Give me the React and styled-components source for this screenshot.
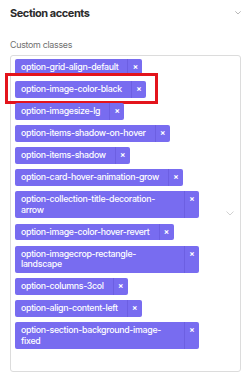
import React from "react";
import styled, { createGlobalStyle } from "styled-components";

const Global = createGlobalStyle`
  html, body { margin: 0; padding: 0; background: #ffffff; }
  body { font-family: Inter, "Noto Sans", sans-serif; -webkit-font-smoothing: antialiased; }
`;

const Page = styled.div`
  width: 250px;
  height: 378px;
  box-sizing: border-box;
  padding: 0 9px 0 10px;
  overflow: hidden;
`;

const Header = styled.div`
  height: 25px;
  display: flex;
  align-items: center;
  justify-content: space-between;
`;

const Title = styled.h3`
  margin: 0;
  font-size: 11px;
  font-weight: 700;
  color: #2b2b2b;
  letter-spacing: -0.45px;
`;

const Label = styled.div`
  margin-top: 14px;
  font-size: 8.9px;
  line-height: 12px;
  color: #707070;
  letter-spacing: -0.3px;
`;

const Control = styled.div`
  margin-top: 4px;
  border: 1px solid #dcdcdc;
  border-radius: 3px;
  display: flex;
  align-items: stretch;
`;

const Values = styled.div`
  flex: 1;
  display: flex;
  flex-wrap: wrap;
  align-items: flex-start;
  row-gap: 5.5px;
  column-gap: 4px;
  padding: 3px 0 0 4px;
`;

const Tag = styled.div`
  position: relative;
  display: flex;
  align-items: stretch;
  max-width: 184px;
  background: #786cf0;
  border-radius: 2px;
  color: #ffffff;
  font-size: 8.8px;
  font-weight: 500;
  line-height: 10.5px;
  letter-spacing: -0.3px;

  ${(p) =>
    p.$highlighted &&
    `
    &::after {
      content: "";
      position: absolute;
      left: -10px;
      top: -8px;
      right: -12px;
      bottom: -6px;
      border: 3px solid #e3141c;
      pointer-events: none;
    }
  `}
`;

const TagLabel = styled.span`
  padding: 3px 9px 3px 6px;
  flex: 1;
  min-width: 0;
`;

const Remove = styled.span`
  width: 14px;
  flex: none;
  border-left: 1px solid #6c5fe2;
  display: flex;
  justify-content: center;
  padding-top: 3px;
  font-size: 8px;
  line-height: 10.5px;
  font-weight: 700;
  letter-spacing: 0;
`;

const InputLine = styled.div`
  flex-basis: 100%;
  height: 16.5px;
`;

const Indicator = styled.div`
  flex: none;
  display: flex;
  align-items: center;
  padding: 0 6px 0 8px;
`;

const Chevron = ({ size = 8, color = "#999" }) => (
  <svg width={size} height={size * 0.6} viewBox="0 0 10 6" fill="none">
    <path d="M1 1l4 4 4-4" stroke={color} strokeWidth="1.2" strokeLinecap="round" strokeLinejoin="round" />
  </svg>
);

const HeaderChevron = styled.span`
  display: flex;
`;

const tags = [
  "option-grid-align-default",
  "option-image-color-black",
  "option-imagesize-lg",
  "option-items-shadow-on-hover",
  "option-items-shadow",
  "option-card-hover-animation-grow",
  "option-collection-title-decoration-arrow",
  "option-image-color-hover-revert",
  "option-imagecrop-rectangle-landscape",
  "option-columns-3col",
  "option-align-content-left",
  "option-section-background-image-fixed",
];

export default function App() {
  return (
    <>
      <Global />
      <Page>
        <Header>
          <Title>Section accents</Title>
          <HeaderChevron>
            <Chevron size={6} color="#9a9a9a" />
          </HeaderChevron>
        </Header>
        <Label>Custom classes</Label>
        <Control>
          <Values>
            {tags.map((t) => (
              <Tag key={t} $highlighted={t === "option-image-color-black"}>
                <TagLabel>{t}</TagLabel>
                <Remove>×</Remove>
              </Tag>
            ))}
            <InputLine />
          </Values>
          <Indicator>
            <Chevron size={8} color="#cfcfcf" />
          </Indicator>
        </Control>
      </Page>
    </>
  );
}
